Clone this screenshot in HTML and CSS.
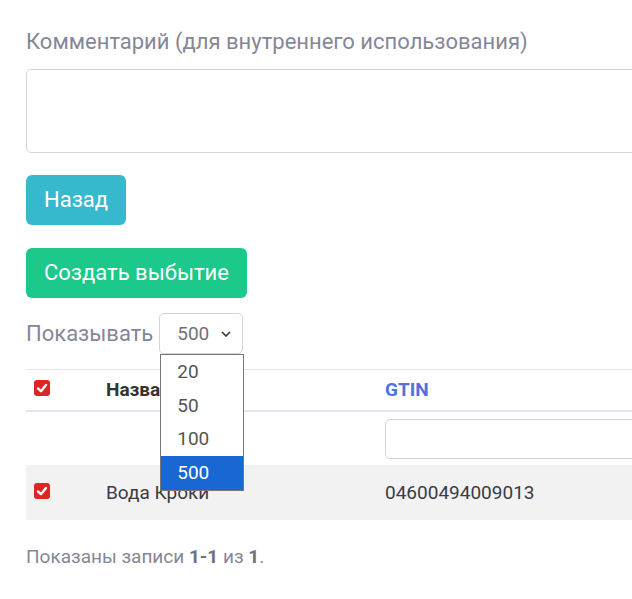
FILE: index.html
```html
<!DOCTYPE html>
<html lang="ru">
<head>
    <meta charset="UTF-8">
    <meta name="viewport" content="width=device-width, initial-scale=1.0">
    <title>Выбытие</title>

    <link rel="stylesheet" href="styles.css">
</head>

<body>
    <div class="wrapper">
        <div class="form-group">
            <label class="form-label" for="comment">Комментарий (для внутреннего использования)</label>
            <textarea id="comment" class="form-control"></textarea>
        </div>

        <div class="actions">
            <button class="btn btn-info">Назад</button>
            <button class="btn btn-success">Создать выбытие</button>
        </div>

        <div class="page-size">
            <span class="page-size-label">Показывать</span>
            <div class="select-wrap">
                <div class="select-box">
                    <span>500</span>
                    <svg class="chevron" width="10" height="6" viewBox="0 0 10 6">
                        <polyline points="1,1 5,5 9,1" fill="none" stroke="#343a40" stroke-width="1.6" />
                    </svg>
                </div>
                <ul class="select-list">
                    <li>20</li>
                    <li>50</li>
                    <li>100</li>
                    <li class="selected">500</li>
                </ul>
            </div>
        </div>

        <table class="grid">
            <colgroup>
                <col class="col-check">
                <col class="col-name">
                <col class="col-gtin">
            </colgroup>
            <thead>
                <tr class="head-row">
                    <th><span class="check"><svg width="16" height="16" viewBox="0 0 16 16"><polyline points="4,8.5 7,11.2 12,5" fill="none" stroke="#fff" stroke-width="2.4" stroke-linecap="round" stroke-linejoin="round" /></svg></span></th>
                    <th>Название</th>
                    <th><a href="#" class="sort-link">GTIN</a></th>
                </tr>
                <tr class="filter-row">
                    <td></td>
                    <td></td>
                    <td><input type="text" class="form-control filter-input"></td>
                </tr>
            </thead>
            <tbody>
                <tr class="data-row">
                    <td><span class="check"><svg width="16" height="16" viewBox="0 0 16 16"><polyline points="4,8.5 7,11.2 12,5" fill="none" stroke="#fff" stroke-width="2.4" stroke-linecap="round" stroke-linejoin="round" /></svg></span></td>
                    <td>Вода Кроки</td>
                    <td>04600494009013</td>
                </tr>
            </tbody>
        </table>

        <div class="summary">Показаны записи <b>1-1</b> из <b>1</b>.</div>
    </div>
</body>

</html>
```

FILE: styles.css
```css
* {
    padding: 0;
    margin: 0;
    box-sizing: border-box;
}

body {
    font-family: Roboto, "Liberation Sans", sans-serif;
    background-color: #ffffff;
    color: #3a3b45;
    overflow: hidden;
}

.wrapper {
    width: 1000px;
    padding: 27px 0 0 26px;
}

.form-label {
    display: block;
    font-size: 22px;
    line-height: 30px;
    color: #858796;
}

.form-control {
    display: block;
    width: 100%;
    border: 1px solid #d1d3e2;
    border-radius: 5px;
    background-color: #fff;
    outline: none;
    font-family: inherit;
}

textarea.form-control {
    margin-top: 12px;
    height: 84px;
    resize: none;
}

.actions {
    display: flex;
    flex-direction: column;
    align-items: flex-start;
    gap: 23px;
    margin-top: 22px;
}

.btn {
    border: none;
    border-radius: 6px;
    padding: 10px 18px;
    font-family: inherit;
    font-size: 22px;
    line-height: 30px;
    color: #ffffff;
    cursor: pointer;
}

.btn-info {
    background-color: #36b9cc;
}

.btn-success {
    background-color: #1cc88a;
}

.page-size {
    display: flex;
    align-items: center;
    gap: 6px;
    margin-top: 15px;
}

.page-size-label {
    font-size: 22px;
    color: #858796;
}

.select-wrap {
    position: relative;
}

.select-box {
    display: flex;
    align-items: center;
    justify-content: space-between;
    width: 84px;
    height: 41px;
    padding: 0 11px 0 17px;
    border: 1px solid #d1d3e2;
    border-radius: 5px;
    font-size: 19px;
    color: #6e707e;
}

.select-list {
    position: absolute;
    top: 41px;
    left: 1px;
    width: 84px;
    list-style: none;
    background-color: #fff;
    border: 1px solid #767676;
    z-index: 5;
}

.select-list li {
    height: 33.7px;
    line-height: 33.7px;
    padding-left: 16px;
    font-size: 19px;
    color: #555;
}

.select-list li.selected {
    background-color: #1967d2;
    color: #fff;
}

.grid {
    margin-top: 15px;
    width: 100%;
    border-collapse: collapse;
    table-layout: fixed;
    font-size: 19px;
}

.col-check {
    width: 72px;
}

.col-name {
    width: 279px;
}

.grid th,
.grid td {
    text-align: left;
    vertical-align: top;
    padding: 6px 8px;
    line-height: 28px;
}

.head-row th {
    border-top: 1px solid #e3e6f0;
    border-bottom: 2px solid #e3e6f0;
    font-weight: 700;
    color: #333;
}

.sort-link {
    color: #4e73df;
    text-decoration: none;
}

.filter-row td {
    padding: 7px 8px 6px;
}

.filter-input {
    height: 40px;
}

.data-row td {
    background-color: #f2f2f2;
    padding: 14px 8px 13px;
    color: #3a3b45;
}

.check {
    display: inline-block;
    width: 16px;
    height: 16px;
    margin-top: 4px;
    border-radius: 3px;
    background-color: #e02424;
    vertical-align: top;
}

.check svg {
    display: block;
}

.summary {
    margin-top: 23px;
    font-size: 19px;
    line-height: 27px;
    color: #858796;
}

.summary b {
    color: #6e707e;
}
```
